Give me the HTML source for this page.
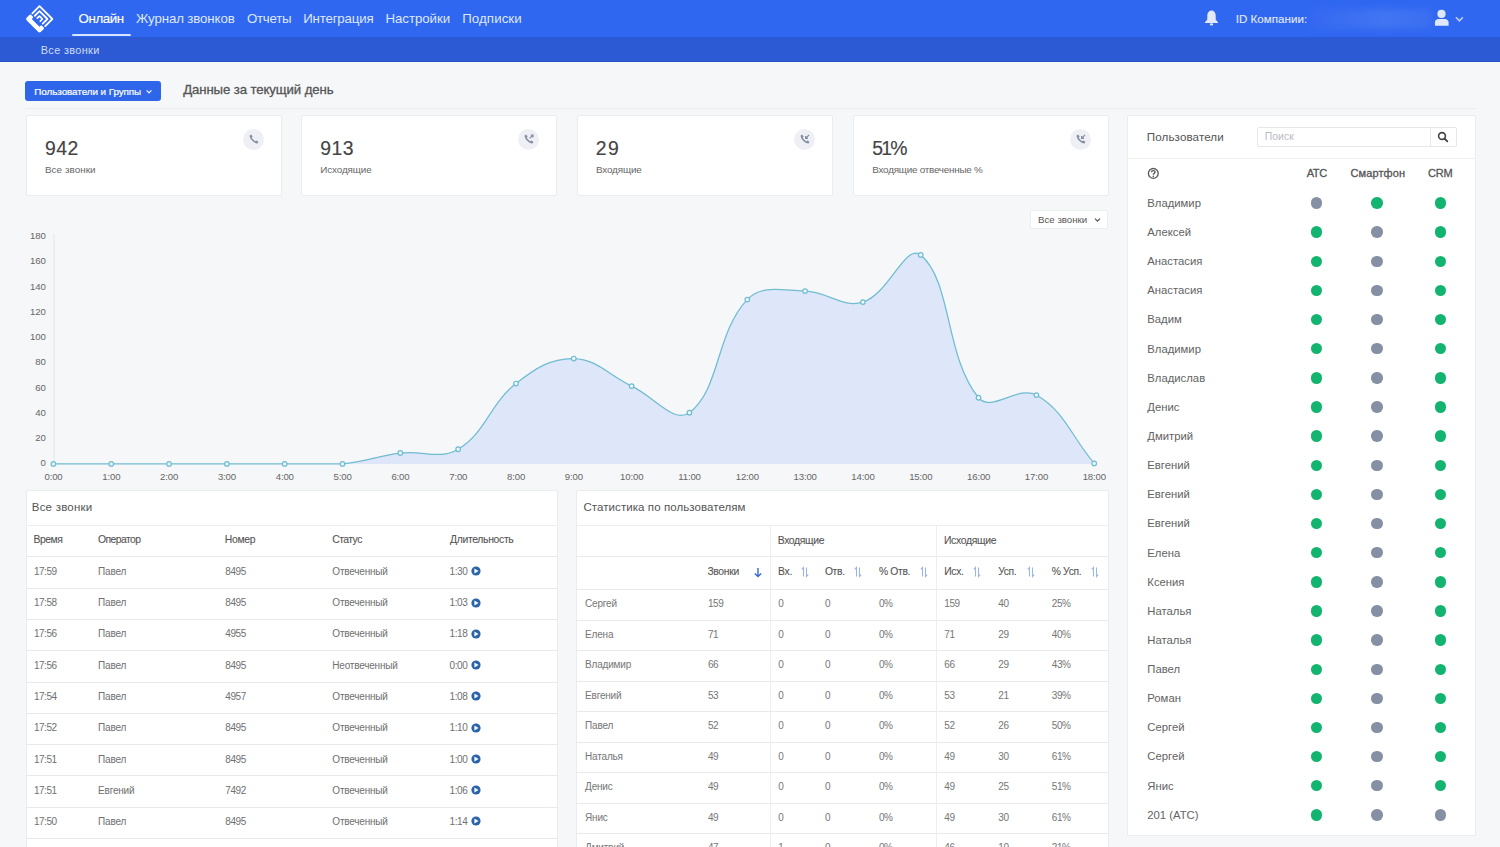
<!DOCTYPE html>
<html><head><meta charset="utf-8"><style>
html,body{margin:0;padding:0}
body{width:1500px;height:847px;overflow:hidden;position:relative;background:#f6f7f9;font-family:"Liberation Sans",sans-serif}
.t{position:absolute;white-space:nowrap;line-height:1}
.r{position:absolute}
</style></head><body>
<div class="r" style="left:0px;top:0px;width:1500px;height:37px;background:#3067f1"></div>
<div class="r" style="left:0px;top:37px;width:1500px;height:25px;background:#2c5ad4"></div>
<div class="r" style="left:0px;top:61px;width:1500px;height:1px;background:#2a53c4"></div>
<svg class="r" style="left:20px;top:0px" width="40" height="37" viewBox="20 0 40 37">
<g transform="translate(39.5,19) rotate(45)" fill="none" stroke="#fff" stroke-linecap="round" stroke-linejoin="round">
<path d="M-9.1,1 V-9.1 H9.1 V1" stroke-width="1.8"/>
<path d="M-5.6,1 V-5.6 H5.6 V1" stroke-width="1.8"/>
<path d="M-2.1,1 V-2.1 H2.1 V1" stroke-width="1.7"/>
</g>
<g transform="translate(39.5,19) rotate(45)" fill="#fff">
<path d="M-10,4 Q-10,3 -9,3 H-6.5 Q-5.5,3 -5.5,4 V5.5 H5.5 V4 Q5.5,3 6.5,3 H9 Q10,3 10,4 V8 Q10,10 8,10 H-8 Q-10,10 -10,8 Z"/>
</g></svg>
<div class="t" style="left:78.60px;top:11.64px;font-size:13.3px;color:#fff;letter-spacing:-0.41px;-webkit-text-stroke:0.15px #fff">Онлайн</div>
<div class="t" style="left:136.10px;top:11.64px;font-size:13.3px;color:#dfe7ff;letter-spacing:-0.137px">Журнал звонков</div>
<div class="t" style="left:246.90px;top:11.64px;font-size:13.3px;color:#dfe7ff;letter-spacing:-0.238px">Отчеты</div>
<div class="t" style="left:303.14px;top:11.64px;font-size:13.3px;color:#dfe7ff;letter-spacing:-0.173px">Интеграция</div>
<div class="t" style="left:385.44px;top:11.64px;font-size:13.3px;color:#dfe7ff;letter-spacing:-0.068px">Настройки</div>
<div class="t" style="left:462.24px;top:11.64px;font-size:13.3px;color:#dfe7ff;letter-spacing:0.073px">Подписки</div>
<div class="r" style="left:72.2px;top:34.4px;width:58.4px;height:2px;background:#d6e4fd;border-radius:1px"></div>
<div class="t" style="left:40.73px;top:44.57px;font-size:10.9px;color:#cfdbfb;letter-spacing:0.356px">Все звонки</div>
<svg class="r" style="left:1203px;top:9px" width="17" height="18" viewBox="0 0 17 18">
<path d="M8.5,1.6 C6.2,1.6 4.3,3.6 4.3,6.6 V10.4 L1.9,13.4 V13.9 H15.1 V13.4 L12.7,10.4 V6.6 C12.7,3.6 10.8,1.6 8.5,1.6 Z" fill="#e3e8fb"/>
<ellipse cx="8.5" cy="15.4" rx="1.7" ry="1.1" fill="#e3e8fb"/></svg>
<div class="t" style="left:1235.66px;top:12.58px;font-size:11.6px;color:#e3eaff;letter-spacing:0.028px;-webkit-text-stroke:0.1px #e3eaff">ID Компании:</div>
<div class="r" style="left:1310px;top:9px;width:122px;height:20px;background:linear-gradient(90deg,#3568f1,#4175f2 60%,#3a6ef1);filter:blur(3px);border-radius:4px"></div>
<svg class="r" style="left:1432px;top:8px" width="36" height="20" viewBox="0 0 36 20">
<circle cx="9.5" cy="5.9" r="4.1" fill="#dfe7fb"/>
<path d="M2.9,17.7 V14.6 C2.9,12.4 4.6,11 6.8,11 H12.6 C14.8,11 16.6,12.4 16.6,14.6 V17.7 Z" fill="#dfe7fb"/>
<path d="M23.9,9.3 L27.4,12.9 L30.9,9.3" fill="none" stroke="#bccdf8" stroke-width="1.6"/>
</svg>
<div class="r" style="left:25px;top:81px;width:136px;height:20px;background:#2f66e9;border-radius:3px"></div>
<div class="t" style="left:34.31px;top:86.62px;font-size:9.9px;color:#fff;letter-spacing:-0.073px;-webkit-text-stroke:0.2px #fff">Пользователи и Группы</div>
<svg class="r" style="left:145px;top:89px" width="8" height="6" viewBox="0 0 8 6"><path d="M1.6,1.4 L4,3.9 L6.4,1.4" fill="none" stroke="#f0f4ff" stroke-width="1.3"/></svg>
<div class="t" style="left:183.13px;top:82.83px;font-size:13.2px;color:#555;letter-spacing:-0.098px;-webkit-text-stroke:0.3px #555">Данные за текущий день</div>
<div class="r" style="left:25px;top:108px;width:1452px;height:1px;background:#eaecf0"></div>
<div class="r" style="left:26px;top:115px;width:256px;height:81px;background:#fff;border:1px solid #eaecef;box-sizing:border-box;border-radius:2px"></div>
<div class="t" style="left:44.93px;top:138.98px;font-size:19.4px;color:#444;letter-spacing:0.471px;-webkit-text-stroke:0.15px #444">942</div>
<div class="t" style="left:45.01px;top:164.62px;font-size:9.9px;color:#666;letter-spacing:0.038px">Все звонки</div>
<div class="r" style="left:243.0px;top:128.5px;width:21px;height:21px;border-radius:50%;background:#eff0f5"></div>
<svg class="r" style="left:247.5px;top:133px" width="12" height="12" viewBox="0 0 12 12"><path d="M3.2,1.6 L4.6,3.6 L3.8,4.8 C4.4,6 5.8,7.4 7.2,8.2 L8.4,7.4 L10.4,8.8 L9.6,10.4 C6.2,10.6 1.4,5.8 1.6,2.4 Z" fill="#858ea3"/></svg>
<div class="r" style="left:301px;top:115px;width:256px;height:81px;background:#fff;border:1px solid #eaecef;box-sizing:border-box;border-radius:2px"></div>
<div class="t" style="left:320.13px;top:138.98px;font-size:19.4px;color:#444;letter-spacing:0.524px;-webkit-text-stroke:0.15px #444">913</div>
<div class="t" style="left:320.21px;top:164.62px;font-size:9.9px;color:#666;letter-spacing:-0.11px">Исходящие</div>
<div class="r" style="left:518.0px;top:128.5px;width:21px;height:21px;border-radius:50%;background:#eff0f5"></div>
<svg class="r" style="left:522.5px;top:133px" width="12" height="12" viewBox="0 0 12 12"><path d="M3.2,1.6 L4.6,3.6 L3.8,4.8 C4.4,6 5.8,7.4 7.2,8.2 L8.4,7.4 L10.4,8.8 L9.6,10.4 C6.2,10.6 1.4,5.8 1.6,2.4 Z" fill="#858ea3"/><path d="M6.6,5.4 L10,2 M7.6,2 H10 V4.4" fill="none" stroke="#858ea3" stroke-width="1.2"/></svg>
<div class="r" style="left:577px;top:115px;width:256px;height:81px;background:#fff;border:1px solid #eaecef;box-sizing:border-box;border-radius:2px"></div>
<div class="t" style="left:595.83px;top:138.98px;font-size:19.4px;color:#444;letter-spacing:1.409px;-webkit-text-stroke:0.15px #444">29</div>
<div class="t" style="left:596.01px;top:164.62px;font-size:9.9px;color:#666;letter-spacing:-0.155px">Входящие</div>
<div class="r" style="left:794.0px;top:128.5px;width:21px;height:21px;border-radius:50%;background:#eff0f5"></div>
<svg class="r" style="left:798.5px;top:133px" width="12" height="12" viewBox="0 0 12 12"><path d="M3.2,1.6 L4.6,3.6 L3.8,4.8 C4.4,6 5.8,7.4 7.2,8.2 L8.4,7.4 L10.4,8.8 L9.6,10.4 C6.2,10.6 1.4,5.8 1.6,2.4 Z" fill="#858ea3"/><path d="M10,2 L6.6,5.4 M6.6,3 V5.4 H9" fill="none" stroke="#858ea3" stroke-width="1.2"/></svg>
<div class="r" style="left:853px;top:115px;width:256px;height:81px;background:#fff;border:1px solid #eaecef;box-sizing:border-box;border-radius:2px"></div>
<div class="t" style="left:872.32px;top:138.98px;font-size:19.4px;color:#444;letter-spacing:-1.872px;-webkit-text-stroke:0.15px #444">51%</div>
<div class="t" style="left:872.31px;top:164.62px;font-size:9.9px;color:#666;letter-spacing:-0.24px">Входящие отвеченные %</div>
<div class="r" style="left:1070.0px;top:128.5px;width:21px;height:21px;border-radius:50%;background:#eff0f5"></div>
<svg class="r" style="left:1074.5px;top:133px" width="12" height="12" viewBox="0 0 12 12"><path d="M3.2,1.6 L4.6,3.6 L3.8,4.8 C4.4,6 5.8,7.4 7.2,8.2 L8.4,7.4 L10.4,8.8 L9.6,10.4 C6.2,10.6 1.4,5.8 1.6,2.4 Z" fill="#858ea3"/><path d="M10,2 L6.6,5.4 M6.6,3 V5.4 H9" fill="none" stroke="#858ea3" stroke-width="1.2"/></svg>
<div class="r" style="left:1029.5px;top:209.5px;width:78.5px;height:19.5px;background:#fff;border:1px solid #eceef1;box-sizing:border-box;border-radius:2px"></div>
<div class="t" style="left:1038.00px;top:214.59px;font-size:9.7px;color:#555">Все звонки</div>
<svg class="r" style="left:1094px;top:217px" width="7" height="6" viewBox="0 0 7 6"><path d="M1,1.6 L3.5,4.1 L6,1.6" fill="none" stroke="#555" stroke-width="1.3"/></svg>
<svg class="r" style="left:0;top:200px" width="1120" height="300" viewBox="0 200 1120 300"><line x1="54" y1="234" x2="54" y2="464" stroke="#e3e5e9" stroke-width="1"/><path d="M53.40,463.90 C76.53,463.90 88.09,463.90 111.22,463.90 C134.35,463.90 145.92,463.90 169.04,463.90 C192.17,463.90 203.74,463.90 226.87,463.90 C250.00,463.90 261.56,463.90 284.69,463.90 C307.82,463.90 319.58,463.90 342.51,463.90 C365.84,461.71 377.03,455.98 400.33,453.02 C423.29,450.11 439.72,460.29 458.16,449.23 C485.98,432.52 489.09,404.66 515.98,383.57 C535.35,368.38 550.86,358.02 573.80,358.53 C597.12,359.04 608.42,375.24 631.62,386.10 C654.67,396.89 674.01,424.22 689.44,412.67 C720.26,389.61 715.59,332.88 747.27,299.58 C761.84,284.25 782.04,290.60 805.09,291.10 C828.30,291.61 842.51,308.49 862.91,302.11 C888.77,294.02 905.64,242.44 920.73,254.92 C951.90,280.69 944.93,356.99 978.56,397.74 C991.19,413.05 1018.21,384.77 1036.38,395.08 C1064.47,411.03 1071.07,436.07 1094.20,463.39 L1094.20,463.90 L53.40,463.90 Z" fill="#dee6fa"/><path d="M53.40,463.90 C76.53,463.90 88.09,463.90 111.22,463.90 C134.35,463.90 145.92,463.90 169.04,463.90 C192.17,463.90 203.74,463.90 226.87,463.90 C250.00,463.90 261.56,463.90 284.69,463.90 C307.82,463.90 319.58,463.90 342.51,463.90 C365.84,461.71 377.03,455.98 400.33,453.02 C423.29,450.11 439.72,460.29 458.16,449.23 C485.98,432.52 489.09,404.66 515.98,383.57 C535.35,368.38 550.86,358.02 573.80,358.53 C597.12,359.04 608.42,375.24 631.62,386.10 C654.67,396.89 674.01,424.22 689.44,412.67 C720.26,389.61 715.59,332.88 747.27,299.58 C761.84,284.25 782.04,290.60 805.09,291.10 C828.30,291.61 842.51,308.49 862.91,302.11 C888.77,294.02 905.64,242.44 920.73,254.92 C951.90,280.69 944.93,356.99 978.56,397.74 C991.19,413.05 1018.21,384.77 1036.38,395.08 C1064.47,411.03 1071.07,436.07 1094.20,463.39" fill="none" stroke="#70bcd0" stroke-width="1.25"/><circle cx="53.40" cy="463.90" r="2.3" fill="#eaf8fb" stroke="#70bcd0" stroke-width="1.2"/><circle cx="111.22" cy="463.90" r="2.3" fill="#eaf8fb" stroke="#70bcd0" stroke-width="1.2"/><circle cx="169.04" cy="463.90" r="2.3" fill="#eaf8fb" stroke="#70bcd0" stroke-width="1.2"/><circle cx="226.87" cy="463.90" r="2.3" fill="#eaf8fb" stroke="#70bcd0" stroke-width="1.2"/><circle cx="284.69" cy="463.90" r="2.3" fill="#eaf8fb" stroke="#70bcd0" stroke-width="1.2"/><circle cx="342.51" cy="463.90" r="2.3" fill="#eaf8fb" stroke="#70bcd0" stroke-width="1.2"/><circle cx="400.33" cy="453.02" r="2.3" fill="#eaf8fb" stroke="#70bcd0" stroke-width="1.2"/><circle cx="458.16" cy="449.23" r="2.3" fill="#eaf8fb" stroke="#70bcd0" stroke-width="1.2"/><circle cx="515.98" cy="383.57" r="2.3" fill="#eaf8fb" stroke="#70bcd0" stroke-width="1.2"/><circle cx="573.80" cy="358.53" r="2.3" fill="#eaf8fb" stroke="#70bcd0" stroke-width="1.2"/><circle cx="631.62" cy="386.10" r="2.3" fill="#eaf8fb" stroke="#70bcd0" stroke-width="1.2"/><circle cx="689.44" cy="412.67" r="2.3" fill="#eaf8fb" stroke="#70bcd0" stroke-width="1.2"/><circle cx="747.27" cy="299.58" r="2.3" fill="#eaf8fb" stroke="#70bcd0" stroke-width="1.2"/><circle cx="805.09" cy="291.10" r="2.3" fill="#eaf8fb" stroke="#70bcd0" stroke-width="1.2"/><circle cx="862.91" cy="302.11" r="2.3" fill="#eaf8fb" stroke="#70bcd0" stroke-width="1.2"/><circle cx="920.73" cy="254.92" r="2.3" fill="#eaf8fb" stroke="#70bcd0" stroke-width="1.2"/><circle cx="978.56" cy="397.74" r="2.3" fill="#eaf8fb" stroke="#70bcd0" stroke-width="1.2"/><circle cx="1036.38" cy="395.08" r="2.3" fill="#eaf8fb" stroke="#70bcd0" stroke-width="1.2"/><circle cx="1094.20" cy="463.39" r="2.3" fill="#eaf8fb" stroke="#70bcd0" stroke-width="1.2"/></svg>
<div class="t" style="left:0.00px;top:458.37px;font-size:9.6px;color:#666;letter-spacing:-0.1px;width:45.7px;text-align:right">0</div>
<div class="t" style="left:0.00px;top:433.11px;font-size:9.6px;color:#666;letter-spacing:-0.1px;width:45.7px;text-align:right">20</div>
<div class="t" style="left:0.00px;top:407.85px;font-size:9.6px;color:#666;letter-spacing:-0.1px;width:45.7px;text-align:right">40</div>
<div class="t" style="left:0.00px;top:382.59px;font-size:9.6px;color:#666;letter-spacing:-0.1px;width:45.7px;text-align:right">60</div>
<div class="t" style="left:0.00px;top:357.33px;font-size:9.6px;color:#666;letter-spacing:-0.1px;width:45.7px;text-align:right">80</div>
<div class="t" style="left:0.00px;top:332.07px;font-size:9.6px;color:#666;letter-spacing:-0.1px;width:45.7px;text-align:right">100</div>
<div class="t" style="left:0.00px;top:306.81px;font-size:9.6px;color:#666;letter-spacing:-0.1px;width:45.7px;text-align:right">120</div>
<div class="t" style="left:0.00px;top:281.55px;font-size:9.6px;color:#666;letter-spacing:-0.1px;width:45.7px;text-align:right">140</div>
<div class="t" style="left:0.00px;top:256.29px;font-size:9.6px;color:#666;letter-spacing:-0.1px;width:45.7px;text-align:right">160</div>
<div class="t" style="left:0.00px;top:231.03px;font-size:9.6px;color:#666;letter-spacing:-0.1px;width:45.7px;text-align:right">180</div>
<div class="t" style="left:23.50px;top:471.97px;font-size:9.6px;color:#666;letter-spacing:-0.15px;width:60px;text-align:center">0:00</div>
<div class="t" style="left:81.32px;top:471.97px;font-size:9.6px;color:#666;letter-spacing:-0.15px;width:60px;text-align:center">1:00</div>
<div class="t" style="left:139.14px;top:471.97px;font-size:9.6px;color:#666;letter-spacing:-0.15px;width:60px;text-align:center">2:00</div>
<div class="t" style="left:196.97px;top:471.97px;font-size:9.6px;color:#666;letter-spacing:-0.15px;width:60px;text-align:center">3:00</div>
<div class="t" style="left:254.79px;top:471.97px;font-size:9.6px;color:#666;letter-spacing:-0.15px;width:60px;text-align:center">4:00</div>
<div class="t" style="left:312.61px;top:471.97px;font-size:9.6px;color:#666;letter-spacing:-0.15px;width:60px;text-align:center">5:00</div>
<div class="t" style="left:370.43px;top:471.97px;font-size:9.6px;color:#666;letter-spacing:-0.15px;width:60px;text-align:center">6:00</div>
<div class="t" style="left:428.26px;top:471.97px;font-size:9.6px;color:#666;letter-spacing:-0.15px;width:60px;text-align:center">7:00</div>
<div class="t" style="left:486.08px;top:471.97px;font-size:9.6px;color:#666;letter-spacing:-0.15px;width:60px;text-align:center">8:00</div>
<div class="t" style="left:543.90px;top:471.97px;font-size:9.6px;color:#666;letter-spacing:-0.15px;width:60px;text-align:center">9:00</div>
<div class="t" style="left:601.72px;top:471.97px;font-size:9.6px;color:#666;letter-spacing:-0.15px;width:60px;text-align:center">10:00</div>
<div class="t" style="left:659.54px;top:471.97px;font-size:9.6px;color:#666;letter-spacing:-0.15px;width:60px;text-align:center">11:00</div>
<div class="t" style="left:717.37px;top:471.97px;font-size:9.6px;color:#666;letter-spacing:-0.15px;width:60px;text-align:center">12:00</div>
<div class="t" style="left:775.19px;top:471.97px;font-size:9.6px;color:#666;letter-spacing:-0.15px;width:60px;text-align:center">13:00</div>
<div class="t" style="left:833.01px;top:471.97px;font-size:9.6px;color:#666;letter-spacing:-0.15px;width:60px;text-align:center">14:00</div>
<div class="t" style="left:890.83px;top:471.97px;font-size:9.6px;color:#666;letter-spacing:-0.15px;width:60px;text-align:center">15:00</div>
<div class="t" style="left:948.66px;top:471.97px;font-size:9.6px;color:#666;letter-spacing:-0.15px;width:60px;text-align:center">16:00</div>
<div class="t" style="left:1006.48px;top:471.97px;font-size:9.6px;color:#666;letter-spacing:-0.15px;width:60px;text-align:center">17:00</div>
<div class="t" style="left:1064.30px;top:471.97px;font-size:9.6px;color:#666;letter-spacing:-0.15px;width:60px;text-align:center">18:00</div>
<div class="r" style="left:26px;top:490px;width:532px;height:400px;background:#fff;border:1px solid #eaecef;box-sizing:border-box;border-radius:2px"></div>
<div class="t" style="left:31.78px;top:502.07px;font-size:11.5px;color:#555;letter-spacing:0.216px">Все звонки</div>
<div class="r" style="left:26px;top:525px;width:532px;height:1px;background:#eceef1"></div>
<div class="t" style="left:33.47px;top:535.30px;font-size:10.4px;color:#555;letter-spacing:-0.486px;-webkit-text-stroke:0.1px #555">Время</div>
<div class="t" style="left:98.03px;top:535.30px;font-size:10.4px;color:#555;letter-spacing:-0.568px;-webkit-text-stroke:0.1px #555">Оператор</div>
<div class="t" style="left:224.87px;top:535.30px;font-size:10.4px;color:#555;letter-spacing:-0.358px;-webkit-text-stroke:0.1px #555">Номер</div>
<div class="t" style="left:332.18px;top:535.30px;font-size:10.4px;color:#555;letter-spacing:-0.537px;-webkit-text-stroke:0.1px #555">Статус</div>
<div class="t" style="left:449.95px;top:535.30px;font-size:10.4px;color:#555;letter-spacing:-0.32px;-webkit-text-stroke:0.1px #555">Длительность</div>
<div class="r" style="left:26px;top:556px;width:532px;height:1px;background:#e8eaee"></div>
<div class="t" style="left:33.90px;top:566.93px;font-size:10px;color:#707070;letter-spacing:-0.45px">17:59</div>
<div class="t" style="left:98.10px;top:566.93px;font-size:10px;color:#707070;letter-spacing:-0.2px">Павел</div>
<div class="t" style="left:225.30px;top:566.93px;font-size:10px;color:#707070;letter-spacing:-0.45px">8495</div>
<div class="t" style="left:332.30px;top:566.93px;font-size:10px;color:#707070;letter-spacing:-0.2px">Отвеченный</div>
<div class="t" style="left:449.60px;top:566.93px;font-size:10px;color:#707070;letter-spacing:-0.45px">1:30</div>
<svg class="r" style="left:471px;top:566.3px" width="10" height="10" viewBox="0 0 10 10"><circle cx="5" cy="5" r="4.6" fill="#2b62a8"/><path d="M3.4,2.6 L7.6,5 L3.4,7.4 Z" fill="#f2fbff"/></svg>
<div class="r" style="left:26px;top:588px;width:532px;height:1px;background:#e8eaee"></div>
<div class="t" style="left:33.90px;top:598.20px;font-size:10px;color:#707070;letter-spacing:-0.45px">17:58</div>
<div class="t" style="left:98.10px;top:598.20px;font-size:10px;color:#707070;letter-spacing:-0.2px">Павел</div>
<div class="t" style="left:225.30px;top:598.20px;font-size:10px;color:#707070;letter-spacing:-0.45px">8495</div>
<div class="t" style="left:332.30px;top:598.20px;font-size:10px;color:#707070;letter-spacing:-0.2px">Отвеченный</div>
<div class="t" style="left:449.60px;top:598.20px;font-size:10px;color:#707070;letter-spacing:-0.45px">1:03</div>
<svg class="r" style="left:471px;top:597.5699999999999px" width="10" height="10" viewBox="0 0 10 10"><circle cx="5" cy="5" r="4.6" fill="#2b62a8"/><path d="M3.4,2.6 L7.6,5 L3.4,7.4 Z" fill="#f2fbff"/></svg>
<div class="r" style="left:26px;top:619px;width:532px;height:1px;background:#e8eaee"></div>
<div class="t" style="left:33.90px;top:629.47px;font-size:10px;color:#707070;letter-spacing:-0.45px">17:56</div>
<div class="t" style="left:98.10px;top:629.47px;font-size:10px;color:#707070;letter-spacing:-0.2px">Павел</div>
<div class="t" style="left:225.30px;top:629.47px;font-size:10px;color:#707070;letter-spacing:-0.45px">4955</div>
<div class="t" style="left:332.30px;top:629.47px;font-size:10px;color:#707070;letter-spacing:-0.2px">Отвеченный</div>
<div class="t" style="left:449.60px;top:629.47px;font-size:10px;color:#707070;letter-spacing:-0.45px">1:18</div>
<svg class="r" style="left:471px;top:628.8399999999999px" width="10" height="10" viewBox="0 0 10 10"><circle cx="5" cy="5" r="4.6" fill="#2b62a8"/><path d="M3.4,2.6 L7.6,5 L3.4,7.4 Z" fill="#f2fbff"/></svg>
<div class="r" style="left:26px;top:650px;width:532px;height:1px;background:#e8eaee"></div>
<div class="t" style="left:33.90px;top:660.74px;font-size:10px;color:#707070;letter-spacing:-0.45px">17:56</div>
<div class="t" style="left:98.10px;top:660.74px;font-size:10px;color:#707070;letter-spacing:-0.2px">Павел</div>
<div class="t" style="left:225.30px;top:660.74px;font-size:10px;color:#707070;letter-spacing:-0.45px">8495</div>
<div class="t" style="left:332.30px;top:660.74px;font-size:10px;color:#707070;letter-spacing:-0.2px">Неотвеченный</div>
<div class="t" style="left:449.60px;top:660.74px;font-size:10px;color:#707070;letter-spacing:-0.45px">0:00</div>
<svg class="r" style="left:471px;top:660.1099999999999px" width="10" height="10" viewBox="0 0 10 10"><circle cx="5" cy="5" r="4.6" fill="#2b62a8"/><path d="M3.4,2.6 L7.6,5 L3.4,7.4 Z" fill="#f2fbff"/></svg>
<div class="r" style="left:26px;top:682px;width:532px;height:1px;background:#e8eaee"></div>
<div class="t" style="left:33.90px;top:692.01px;font-size:10px;color:#707070;letter-spacing:-0.45px">17:54</div>
<div class="t" style="left:98.10px;top:692.01px;font-size:10px;color:#707070;letter-spacing:-0.2px">Павел</div>
<div class="t" style="left:225.30px;top:692.01px;font-size:10px;color:#707070;letter-spacing:-0.45px">4957</div>
<div class="t" style="left:332.30px;top:692.01px;font-size:10px;color:#707070;letter-spacing:-0.2px">Отвеченный</div>
<div class="t" style="left:449.60px;top:692.01px;font-size:10px;color:#707070;letter-spacing:-0.45px">1:08</div>
<svg class="r" style="left:471px;top:691.38px" width="10" height="10" viewBox="0 0 10 10"><circle cx="5" cy="5" r="4.6" fill="#2b62a8"/><path d="M3.4,2.6 L7.6,5 L3.4,7.4 Z" fill="#f2fbff"/></svg>
<div class="r" style="left:26px;top:713px;width:532px;height:1px;background:#e8eaee"></div>
<div class="t" style="left:33.90px;top:723.28px;font-size:10px;color:#707070;letter-spacing:-0.45px">17:52</div>
<div class="t" style="left:98.10px;top:723.28px;font-size:10px;color:#707070;letter-spacing:-0.2px">Павел</div>
<div class="t" style="left:225.30px;top:723.28px;font-size:10px;color:#707070;letter-spacing:-0.45px">8495</div>
<div class="t" style="left:332.30px;top:723.28px;font-size:10px;color:#707070;letter-spacing:-0.2px">Отвеченный</div>
<div class="t" style="left:449.60px;top:723.28px;font-size:10px;color:#707070;letter-spacing:-0.45px">1:10</div>
<svg class="r" style="left:471px;top:722.65px" width="10" height="10" viewBox="0 0 10 10"><circle cx="5" cy="5" r="4.6" fill="#2b62a8"/><path d="M3.4,2.6 L7.6,5 L3.4,7.4 Z" fill="#f2fbff"/></svg>
<div class="r" style="left:26px;top:744px;width:532px;height:1px;background:#e8eaee"></div>
<div class="t" style="left:33.90px;top:754.55px;font-size:10px;color:#707070;letter-spacing:-0.45px">17:51</div>
<div class="t" style="left:98.10px;top:754.55px;font-size:10px;color:#707070;letter-spacing:-0.2px">Павел</div>
<div class="t" style="left:225.30px;top:754.55px;font-size:10px;color:#707070;letter-spacing:-0.45px">8495</div>
<div class="t" style="left:332.30px;top:754.55px;font-size:10px;color:#707070;letter-spacing:-0.2px">Отвеченный</div>
<div class="t" style="left:449.60px;top:754.55px;font-size:10px;color:#707070;letter-spacing:-0.45px">1:00</div>
<svg class="r" style="left:471px;top:753.92px" width="10" height="10" viewBox="0 0 10 10"><circle cx="5" cy="5" r="4.6" fill="#2b62a8"/><path d="M3.4,2.6 L7.6,5 L3.4,7.4 Z" fill="#f2fbff"/></svg>
<div class="r" style="left:26px;top:775px;width:532px;height:1px;background:#e8eaee"></div>
<div class="t" style="left:33.90px;top:785.82px;font-size:10px;color:#707070;letter-spacing:-0.45px">17:51</div>
<div class="t" style="left:98.10px;top:785.82px;font-size:10px;color:#707070;letter-spacing:-0.2px">Евгений</div>
<div class="t" style="left:225.30px;top:785.82px;font-size:10px;color:#707070;letter-spacing:-0.45px">7492</div>
<div class="t" style="left:332.30px;top:785.82px;font-size:10px;color:#707070;letter-spacing:-0.2px">Отвеченный</div>
<div class="t" style="left:449.60px;top:785.82px;font-size:10px;color:#707070;letter-spacing:-0.45px">1:06</div>
<svg class="r" style="left:471px;top:785.1899999999999px" width="10" height="10" viewBox="0 0 10 10"><circle cx="5" cy="5" r="4.6" fill="#2b62a8"/><path d="M3.4,2.6 L7.6,5 L3.4,7.4 Z" fill="#f2fbff"/></svg>
<div class="r" style="left:26px;top:807px;width:532px;height:1px;background:#e8eaee"></div>
<div class="t" style="left:33.90px;top:817.09px;font-size:10px;color:#707070;letter-spacing:-0.45px">17:50</div>
<div class="t" style="left:98.10px;top:817.09px;font-size:10px;color:#707070;letter-spacing:-0.2px">Павел</div>
<div class="t" style="left:225.30px;top:817.09px;font-size:10px;color:#707070;letter-spacing:-0.45px">8495</div>
<div class="t" style="left:332.30px;top:817.09px;font-size:10px;color:#707070;letter-spacing:-0.2px">Отвеченный</div>
<div class="t" style="left:449.60px;top:817.09px;font-size:10px;color:#707070;letter-spacing:-0.45px">1:14</div>
<svg class="r" style="left:471px;top:816.4599999999999px" width="10" height="10" viewBox="0 0 10 10"><circle cx="5" cy="5" r="4.6" fill="#2b62a8"/><path d="M3.4,2.6 L7.6,5 L3.4,7.4 Z" fill="#f2fbff"/></svg>
<div class="r" style="left:26px;top:838px;width:532px;height:1px;background:#e8eaee"></div>
<div class="r" style="left:576px;top:490px;width:533px;height:400px;background:#fff;border:1px solid #eaecef;box-sizing:border-box;border-radius:2px"></div>
<div class="t" style="left:583.42px;top:501.87px;font-size:11.5px;color:#555;letter-spacing:0.076px">Статистика по пользователям</div>
<div class="r" style="left:577px;top:525px;width:531px;height:1px;background:#eceef1"></div>
<div class="r" style="left:770px;top:526px;width:1px;height:330px;background:#eceef1"></div>
<div class="r" style="left:936px;top:526px;width:1px;height:330px;background:#eceef1"></div>
<div class="t" style="left:777.67px;top:535.70px;font-size:10.4px;color:#555;letter-spacing:-0.342px;-webkit-text-stroke:0.1px #555">Входящие</div>
<div class="t" style="left:943.97px;top:535.70px;font-size:10.4px;color:#555;letter-spacing:-0.321px;-webkit-text-stroke:0.1px #555">Исходящие</div>
<div class="r" style="left:577px;top:556px;width:531px;height:1px;background:#e8eaee"></div>
<div class="t" style="left:707.40px;top:567.38px;font-size:10.3px;color:#555;letter-spacing:-0.3px;-webkit-text-stroke:0.1px #555">Звонки</div>
<svg class="r" style="left:752.6px;top:567px" width="10" height="11" viewBox="0 0 10 11"><path d="M5,1 V9.5 M1.8,6.4 L5,9.6 L8.2,6.4" fill="none" stroke="#3a6ad6" stroke-width="1.4"/></svg>
<div class="t" style="left:778.10px;top:567.38px;font-size:10.3px;color:#555;letter-spacing:-0.3px;-webkit-text-stroke:0.1px #555">Вх.</div>
<svg class="r" style="left:799.9px;top:566px" width="10" height="12" viewBox="0 0 10 12"><path d="M3.5,10.5 V1.5 L1.8,3.4 M6.5,1.5 V10.5 L8.2,8.6" fill="none" stroke="#9db5e6" stroke-width="1.1"/></svg>
<div class="t" style="left:824.90px;top:567.38px;font-size:10.3px;color:#555;letter-spacing:-0.3px;-webkit-text-stroke:0.1px #555">Отв.</div>
<svg class="r" style="left:853.4px;top:566px" width="10" height="12" viewBox="0 0 10 12"><path d="M3.5,10.5 V1.5 L1.8,3.4 M6.5,1.5 V10.5 L8.2,8.6" fill="none" stroke="#9db5e6" stroke-width="1.1"/></svg>
<div class="t" style="left:878.90px;top:567.38px;font-size:10.3px;color:#555;letter-spacing:-0.3px;-webkit-text-stroke:0.1px #555">% Отв.</div>
<svg class="r" style="left:918.9px;top:566px" width="10" height="12" viewBox="0 0 10 12"><path d="M3.5,10.5 V1.5 L1.8,3.4 M6.5,1.5 V10.5 L8.2,8.6" fill="none" stroke="#9db5e6" stroke-width="1.1"/></svg>
<div class="t" style="left:944.20px;top:567.38px;font-size:10.3px;color:#555;letter-spacing:-0.3px;-webkit-text-stroke:0.1px #555">Исх.</div>
<svg class="r" style="left:972.2px;top:566px" width="10" height="12" viewBox="0 0 10 12"><path d="M3.5,10.5 V1.5 L1.8,3.4 M6.5,1.5 V10.5 L8.2,8.6" fill="none" stroke="#9db5e6" stroke-width="1.1"/></svg>
<div class="t" style="left:998.20px;top:567.38px;font-size:10.3px;color:#555;letter-spacing:-0.3px;-webkit-text-stroke:0.1px #555">Усп.</div>
<svg class="r" style="left:1026.2px;top:566px" width="10" height="12" viewBox="0 0 10 12"><path d="M3.5,10.5 V1.5 L1.8,3.4 M6.5,1.5 V10.5 L8.2,8.6" fill="none" stroke="#9db5e6" stroke-width="1.1"/></svg>
<div class="t" style="left:1051.70px;top:567.38px;font-size:10.3px;color:#555;letter-spacing:-0.3px;-webkit-text-stroke:0.1px #555">% Усп.</div>
<svg class="r" style="left:1090.3px;top:566px" width="10" height="12" viewBox="0 0 10 12"><path d="M3.5,10.5 V1.5 L1.8,3.4 M6.5,1.5 V10.5 L8.2,8.6" fill="none" stroke="#9db5e6" stroke-width="1.1"/></svg>
<div class="r" style="left:577px;top:589px;width:531px;height:1px;background:#e8eaee"></div>
<div class="t" style="left:585.10px;top:599.23px;font-size:10px;color:#767676;letter-spacing:-0.2px">Сергей</div>
<div class="t" style="left:708.00px;top:599.23px;font-size:10px;color:#767676;letter-spacing:-0.45px">159</div>
<div class="t" style="left:778.20px;top:599.23px;font-size:10px;color:#767676;letter-spacing:-0.45px">0</div>
<div class="t" style="left:825.00px;top:599.23px;font-size:10px;color:#767676;letter-spacing:-0.45px">0</div>
<div class="t" style="left:879.00px;top:599.23px;font-size:10px;color:#767676;letter-spacing:-0.45px">0%</div>
<div class="t" style="left:944.30px;top:599.23px;font-size:10px;color:#767676;letter-spacing:-0.45px">159</div>
<div class="t" style="left:998.30px;top:599.23px;font-size:10px;color:#767676;letter-spacing:-0.45px">40</div>
<div class="t" style="left:1051.80px;top:599.23px;font-size:10px;color:#767676;letter-spacing:-0.45px">25%</div>
<div class="r" style="left:577px;top:620px;width:531px;height:1px;background:#e8eaee"></div>
<div class="t" style="left:585.10px;top:629.73px;font-size:10px;color:#767676;letter-spacing:-0.2px">Елена</div>
<div class="t" style="left:708.00px;top:629.73px;font-size:10px;color:#767676;letter-spacing:-0.45px">71</div>
<div class="t" style="left:778.20px;top:629.73px;font-size:10px;color:#767676;letter-spacing:-0.45px">0</div>
<div class="t" style="left:825.00px;top:629.73px;font-size:10px;color:#767676;letter-spacing:-0.45px">0</div>
<div class="t" style="left:879.00px;top:629.73px;font-size:10px;color:#767676;letter-spacing:-0.45px">0%</div>
<div class="t" style="left:944.30px;top:629.73px;font-size:10px;color:#767676;letter-spacing:-0.45px">71</div>
<div class="t" style="left:998.30px;top:629.73px;font-size:10px;color:#767676;letter-spacing:-0.45px">29</div>
<div class="t" style="left:1051.80px;top:629.73px;font-size:10px;color:#767676;letter-spacing:-0.45px">40%</div>
<div class="r" style="left:577px;top:650px;width:531px;height:1px;background:#e8eaee"></div>
<div class="t" style="left:585.10px;top:660.23px;font-size:10px;color:#767676;letter-spacing:-0.2px">Владимир</div>
<div class="t" style="left:708.00px;top:660.23px;font-size:10px;color:#767676;letter-spacing:-0.45px">66</div>
<div class="t" style="left:778.20px;top:660.23px;font-size:10px;color:#767676;letter-spacing:-0.45px">0</div>
<div class="t" style="left:825.00px;top:660.23px;font-size:10px;color:#767676;letter-spacing:-0.45px">0</div>
<div class="t" style="left:879.00px;top:660.23px;font-size:10px;color:#767676;letter-spacing:-0.45px">0%</div>
<div class="t" style="left:944.30px;top:660.23px;font-size:10px;color:#767676;letter-spacing:-0.45px">66</div>
<div class="t" style="left:998.30px;top:660.23px;font-size:10px;color:#767676;letter-spacing:-0.45px">29</div>
<div class="t" style="left:1051.80px;top:660.23px;font-size:10px;color:#767676;letter-spacing:-0.45px">43%</div>
<div class="r" style="left:577px;top:681px;width:531px;height:1px;background:#e8eaee"></div>
<div class="t" style="left:585.10px;top:690.73px;font-size:10px;color:#767676;letter-spacing:-0.2px">Евгений</div>
<div class="t" style="left:708.00px;top:690.73px;font-size:10px;color:#767676;letter-spacing:-0.45px">53</div>
<div class="t" style="left:778.20px;top:690.73px;font-size:10px;color:#767676;letter-spacing:-0.45px">0</div>
<div class="t" style="left:825.00px;top:690.73px;font-size:10px;color:#767676;letter-spacing:-0.45px">0</div>
<div class="t" style="left:879.00px;top:690.73px;font-size:10px;color:#767676;letter-spacing:-0.45px">0%</div>
<div class="t" style="left:944.30px;top:690.73px;font-size:10px;color:#767676;letter-spacing:-0.45px">53</div>
<div class="t" style="left:998.30px;top:690.73px;font-size:10px;color:#767676;letter-spacing:-0.45px">21</div>
<div class="t" style="left:1051.80px;top:690.73px;font-size:10px;color:#767676;letter-spacing:-0.45px">39%</div>
<div class="r" style="left:577px;top:711px;width:531px;height:1px;background:#e8eaee"></div>
<div class="t" style="left:585.10px;top:721.23px;font-size:10px;color:#767676;letter-spacing:-0.2px">Павел</div>
<div class="t" style="left:708.00px;top:721.23px;font-size:10px;color:#767676;letter-spacing:-0.45px">52</div>
<div class="t" style="left:778.20px;top:721.23px;font-size:10px;color:#767676;letter-spacing:-0.45px">0</div>
<div class="t" style="left:825.00px;top:721.23px;font-size:10px;color:#767676;letter-spacing:-0.45px">0</div>
<div class="t" style="left:879.00px;top:721.23px;font-size:10px;color:#767676;letter-spacing:-0.45px">0%</div>
<div class="t" style="left:944.30px;top:721.23px;font-size:10px;color:#767676;letter-spacing:-0.45px">52</div>
<div class="t" style="left:998.30px;top:721.23px;font-size:10px;color:#767676;letter-spacing:-0.45px">26</div>
<div class="t" style="left:1051.80px;top:721.23px;font-size:10px;color:#767676;letter-spacing:-0.45px">50%</div>
<div class="r" style="left:577px;top:742px;width:531px;height:1px;background:#e8eaee"></div>
<div class="t" style="left:585.10px;top:751.73px;font-size:10px;color:#767676;letter-spacing:-0.2px">Наталья</div>
<div class="t" style="left:708.00px;top:751.73px;font-size:10px;color:#767676;letter-spacing:-0.45px">49</div>
<div class="t" style="left:778.20px;top:751.73px;font-size:10px;color:#767676;letter-spacing:-0.45px">0</div>
<div class="t" style="left:825.00px;top:751.73px;font-size:10px;color:#767676;letter-spacing:-0.45px">0</div>
<div class="t" style="left:879.00px;top:751.73px;font-size:10px;color:#767676;letter-spacing:-0.45px">0%</div>
<div class="t" style="left:944.30px;top:751.73px;font-size:10px;color:#767676;letter-spacing:-0.45px">49</div>
<div class="t" style="left:998.30px;top:751.73px;font-size:10px;color:#767676;letter-spacing:-0.45px">30</div>
<div class="t" style="left:1051.80px;top:751.73px;font-size:10px;color:#767676;letter-spacing:-0.45px">61%</div>
<div class="r" style="left:577px;top:772px;width:531px;height:1px;background:#e8eaee"></div>
<div class="t" style="left:585.10px;top:782.23px;font-size:10px;color:#767676;letter-spacing:-0.2px">Денис</div>
<div class="t" style="left:708.00px;top:782.23px;font-size:10px;color:#767676;letter-spacing:-0.45px">49</div>
<div class="t" style="left:778.20px;top:782.23px;font-size:10px;color:#767676;letter-spacing:-0.45px">0</div>
<div class="t" style="left:825.00px;top:782.23px;font-size:10px;color:#767676;letter-spacing:-0.45px">0</div>
<div class="t" style="left:879.00px;top:782.23px;font-size:10px;color:#767676;letter-spacing:-0.45px">0%</div>
<div class="t" style="left:944.30px;top:782.23px;font-size:10px;color:#767676;letter-spacing:-0.45px">49</div>
<div class="t" style="left:998.30px;top:782.23px;font-size:10px;color:#767676;letter-spacing:-0.45px">25</div>
<div class="t" style="left:1051.80px;top:782.23px;font-size:10px;color:#767676;letter-spacing:-0.45px">51%</div>
<div class="r" style="left:577px;top:803px;width:531px;height:1px;background:#e8eaee"></div>
<div class="t" style="left:585.10px;top:812.73px;font-size:10px;color:#767676;letter-spacing:-0.2px">Янис</div>
<div class="t" style="left:708.00px;top:812.73px;font-size:10px;color:#767676;letter-spacing:-0.45px">49</div>
<div class="t" style="left:778.20px;top:812.73px;font-size:10px;color:#767676;letter-spacing:-0.45px">0</div>
<div class="t" style="left:825.00px;top:812.73px;font-size:10px;color:#767676;letter-spacing:-0.45px">0</div>
<div class="t" style="left:879.00px;top:812.73px;font-size:10px;color:#767676;letter-spacing:-0.45px">0%</div>
<div class="t" style="left:944.30px;top:812.73px;font-size:10px;color:#767676;letter-spacing:-0.45px">49</div>
<div class="t" style="left:998.30px;top:812.73px;font-size:10px;color:#767676;letter-spacing:-0.45px">30</div>
<div class="t" style="left:1051.80px;top:812.73px;font-size:10px;color:#767676;letter-spacing:-0.45px">61%</div>
<div class="r" style="left:577px;top:833px;width:531px;height:1px;background:#e8eaee"></div>
<div class="t" style="left:585.10px;top:843.23px;font-size:10px;color:#767676;letter-spacing:-0.2px">Дмитрий</div>
<div class="t" style="left:708.00px;top:843.23px;font-size:10px;color:#767676;letter-spacing:-0.45px">47</div>
<div class="t" style="left:778.20px;top:843.23px;font-size:10px;color:#767676;letter-spacing:-0.45px">1</div>
<div class="t" style="left:825.00px;top:843.23px;font-size:10px;color:#767676;letter-spacing:-0.45px">0</div>
<div class="t" style="left:879.00px;top:843.23px;font-size:10px;color:#767676;letter-spacing:-0.45px">0%</div>
<div class="t" style="left:944.30px;top:843.23px;font-size:10px;color:#767676;letter-spacing:-0.45px">46</div>
<div class="t" style="left:998.30px;top:843.23px;font-size:10px;color:#767676;letter-spacing:-0.45px">10</div>
<div class="t" style="left:1051.80px;top:843.23px;font-size:10px;color:#767676;letter-spacing:-0.45px">21%</div>
<div class="r" style="left:577px;top:864px;width:531px;height:1px;background:#e8eaee"></div>
<div class="r" style="left:1127px;top:115px;width:349px;height:721px;background:#fff;border:1px solid #eaecef;box-sizing:border-box;border-radius:2px"></div>
<div class="t" style="left:1146.87px;top:131.28px;font-size:11.6px;color:#555;letter-spacing:0.108px">Пользователи</div>
<div class="r" style="left:1257px;top:127px;width:199.5px;height:20px;background:#fff;border:1px solid #e6e7ea;box-sizing:border-box;border-radius:2px"></div>
<div class="r" style="left:1430px;top:127px;width:1px;height:20px;background:#e6e7ea"></div>
<div class="t" style="left:1264.68px;top:132.08px;font-size:10.3px;color:#b9bbbf;letter-spacing:0.135px">Поиск</div>
<svg class="r" style="left:1437px;top:131px" width="12" height="12" viewBox="0 0 12 12"><circle cx="5" cy="5" r="3.4" fill="none" stroke="#444" stroke-width="1.6"/><path d="M7.5,7.5 L10.3,10.3" stroke="#444" stroke-width="1.8" stroke-linecap="round"/></svg>
<div class="r" style="left:1127px;top:158px;width:349px;height:1px;background:#eceef1"></div>
<svg class="r" style="left:1146.5px;top:167px" width="13" height="13" viewBox="0 0 13 13"><circle cx="6.3" cy="6.4" r="4.9" fill="none" stroke="#5a5a5a" stroke-width="1.35"/><path d="M4.5,5.2 C4.5,3.1 8.1,3.1 8.1,5.1 C8.1,6.4 6.3,6.4 6.3,7.7" fill="none" stroke="#5a5a5a" stroke-width="1.35"/><circle cx="6.3" cy="9.4" r="0.8" fill="#5a5a5a"/></svg>
<div class="t" style="left:1306.70px;top:168.29px;font-size:11px;color:#555;letter-spacing:-0.367px;-webkit-text-stroke:0.3px #555">АТС</div>
<div class="t" style="left:1350.45px;top:168.29px;font-size:11px;color:#555;letter-spacing:0.119px;-webkit-text-stroke:0.3px #555">Смартфон</div>
<div class="t" style="left:1428.05px;top:168.29px;font-size:11px;color:#555;letter-spacing:-0.197px;-webkit-text-stroke:0.3px #555">CRM</div>
<div class="t" style="left:1147.30px;top:197.83px;font-size:11.3px;color:#636363">Владимир</div>
<div class="r" style="left:1310.70px;top:197.30px;width:11.4px;height:11.4px;border-radius:50%;background:#8590a5"></div>
<div class="r" style="left:1371.30px;top:197.30px;width:11.4px;height:11.4px;border-radius:50%;background:#13b46f"></div>
<div class="r" style="left:1434.50px;top:197.30px;width:11.4px;height:11.4px;border-radius:50%;background:#13b46f"></div>
<div class="t" style="left:1147.30px;top:226.97px;font-size:11.3px;color:#636363">Алексей</div>
<div class="r" style="left:1310.70px;top:226.44px;width:11.4px;height:11.4px;border-radius:50%;background:#13b46f"></div>
<div class="r" style="left:1371.30px;top:226.44px;width:11.4px;height:11.4px;border-radius:50%;background:#8590a5"></div>
<div class="r" style="left:1434.50px;top:226.44px;width:11.4px;height:11.4px;border-radius:50%;background:#13b46f"></div>
<div class="t" style="left:1147.30px;top:256.11px;font-size:11.3px;color:#636363">Анастасия</div>
<div class="r" style="left:1310.70px;top:255.58px;width:11.4px;height:11.4px;border-radius:50%;background:#13b46f"></div>
<div class="r" style="left:1371.30px;top:255.58px;width:11.4px;height:11.4px;border-radius:50%;background:#8590a5"></div>
<div class="r" style="left:1434.50px;top:255.58px;width:11.4px;height:11.4px;border-radius:50%;background:#13b46f"></div>
<div class="t" style="left:1147.30px;top:285.25px;font-size:11.3px;color:#636363">Анастасия</div>
<div class="r" style="left:1310.70px;top:284.72px;width:11.4px;height:11.4px;border-radius:50%;background:#13b46f"></div>
<div class="r" style="left:1371.30px;top:284.72px;width:11.4px;height:11.4px;border-radius:50%;background:#8590a5"></div>
<div class="r" style="left:1434.50px;top:284.72px;width:11.4px;height:11.4px;border-radius:50%;background:#13b46f"></div>
<div class="t" style="left:1147.30px;top:314.39px;font-size:11.3px;color:#636363">Вадим</div>
<div class="r" style="left:1310.70px;top:313.86px;width:11.4px;height:11.4px;border-radius:50%;background:#13b46f"></div>
<div class="r" style="left:1371.30px;top:313.86px;width:11.4px;height:11.4px;border-radius:50%;background:#8590a5"></div>
<div class="r" style="left:1434.50px;top:313.86px;width:11.4px;height:11.4px;border-radius:50%;background:#13b46f"></div>
<div class="t" style="left:1147.30px;top:343.53px;font-size:11.3px;color:#636363">Владимир</div>
<div class="r" style="left:1310.70px;top:343.00px;width:11.4px;height:11.4px;border-radius:50%;background:#13b46f"></div>
<div class="r" style="left:1371.30px;top:343.00px;width:11.4px;height:11.4px;border-radius:50%;background:#8590a5"></div>
<div class="r" style="left:1434.50px;top:343.00px;width:11.4px;height:11.4px;border-radius:50%;background:#13b46f"></div>
<div class="t" style="left:1147.30px;top:372.67px;font-size:11.3px;color:#636363">Владислав</div>
<div class="r" style="left:1310.70px;top:372.14px;width:11.4px;height:11.4px;border-radius:50%;background:#13b46f"></div>
<div class="r" style="left:1371.30px;top:372.14px;width:11.4px;height:11.4px;border-radius:50%;background:#8590a5"></div>
<div class="r" style="left:1434.50px;top:372.14px;width:11.4px;height:11.4px;border-radius:50%;background:#13b46f"></div>
<div class="t" style="left:1147.30px;top:401.81px;font-size:11.3px;color:#636363">Денис</div>
<div class="r" style="left:1310.70px;top:401.28px;width:11.4px;height:11.4px;border-radius:50%;background:#13b46f"></div>
<div class="r" style="left:1371.30px;top:401.28px;width:11.4px;height:11.4px;border-radius:50%;background:#8590a5"></div>
<div class="r" style="left:1434.50px;top:401.28px;width:11.4px;height:11.4px;border-radius:50%;background:#13b46f"></div>
<div class="t" style="left:1147.30px;top:430.95px;font-size:11.3px;color:#636363">Дмитрий</div>
<div class="r" style="left:1310.70px;top:430.42px;width:11.4px;height:11.4px;border-radius:50%;background:#13b46f"></div>
<div class="r" style="left:1371.30px;top:430.42px;width:11.4px;height:11.4px;border-radius:50%;background:#8590a5"></div>
<div class="r" style="left:1434.50px;top:430.42px;width:11.4px;height:11.4px;border-radius:50%;background:#13b46f"></div>
<div class="t" style="left:1147.30px;top:460.09px;font-size:11.3px;color:#636363">Евгений</div>
<div class="r" style="left:1310.70px;top:459.56px;width:11.4px;height:11.4px;border-radius:50%;background:#13b46f"></div>
<div class="r" style="left:1371.30px;top:459.56px;width:11.4px;height:11.4px;border-radius:50%;background:#8590a5"></div>
<div class="r" style="left:1434.50px;top:459.56px;width:11.4px;height:11.4px;border-radius:50%;background:#13b46f"></div>
<div class="t" style="left:1147.30px;top:489.23px;font-size:11.3px;color:#636363">Евгений</div>
<div class="r" style="left:1310.70px;top:488.70px;width:11.4px;height:11.4px;border-radius:50%;background:#13b46f"></div>
<div class="r" style="left:1371.30px;top:488.70px;width:11.4px;height:11.4px;border-radius:50%;background:#8590a5"></div>
<div class="r" style="left:1434.50px;top:488.70px;width:11.4px;height:11.4px;border-radius:50%;background:#13b46f"></div>
<div class="t" style="left:1147.30px;top:518.37px;font-size:11.3px;color:#636363">Евгений</div>
<div class="r" style="left:1310.70px;top:517.84px;width:11.4px;height:11.4px;border-radius:50%;background:#13b46f"></div>
<div class="r" style="left:1371.30px;top:517.84px;width:11.4px;height:11.4px;border-radius:50%;background:#8590a5"></div>
<div class="r" style="left:1434.50px;top:517.84px;width:11.4px;height:11.4px;border-radius:50%;background:#13b46f"></div>
<div class="t" style="left:1147.30px;top:547.51px;font-size:11.3px;color:#636363">Елена</div>
<div class="r" style="left:1310.70px;top:546.98px;width:11.4px;height:11.4px;border-radius:50%;background:#13b46f"></div>
<div class="r" style="left:1371.30px;top:546.98px;width:11.4px;height:11.4px;border-radius:50%;background:#8590a5"></div>
<div class="r" style="left:1434.50px;top:546.98px;width:11.4px;height:11.4px;border-radius:50%;background:#13b46f"></div>
<div class="t" style="left:1147.30px;top:576.65px;font-size:11.3px;color:#636363">Ксения</div>
<div class="r" style="left:1310.70px;top:576.12px;width:11.4px;height:11.4px;border-radius:50%;background:#13b46f"></div>
<div class="r" style="left:1371.30px;top:576.12px;width:11.4px;height:11.4px;border-radius:50%;background:#8590a5"></div>
<div class="r" style="left:1434.50px;top:576.12px;width:11.4px;height:11.4px;border-radius:50%;background:#13b46f"></div>
<div class="t" style="left:1147.30px;top:605.79px;font-size:11.3px;color:#636363">Наталья</div>
<div class="r" style="left:1310.70px;top:605.26px;width:11.4px;height:11.4px;border-radius:50%;background:#13b46f"></div>
<div class="r" style="left:1371.30px;top:605.26px;width:11.4px;height:11.4px;border-radius:50%;background:#8590a5"></div>
<div class="r" style="left:1434.50px;top:605.26px;width:11.4px;height:11.4px;border-radius:50%;background:#13b46f"></div>
<div class="t" style="left:1147.30px;top:634.93px;font-size:11.3px;color:#636363">Наталья</div>
<div class="r" style="left:1310.70px;top:634.40px;width:11.4px;height:11.4px;border-radius:50%;background:#13b46f"></div>
<div class="r" style="left:1371.30px;top:634.40px;width:11.4px;height:11.4px;border-radius:50%;background:#8590a5"></div>
<div class="r" style="left:1434.50px;top:634.40px;width:11.4px;height:11.4px;border-radius:50%;background:#13b46f"></div>
<div class="t" style="left:1147.30px;top:664.07px;font-size:11.3px;color:#636363">Павел</div>
<div class="r" style="left:1310.70px;top:663.54px;width:11.4px;height:11.4px;border-radius:50%;background:#13b46f"></div>
<div class="r" style="left:1371.30px;top:663.54px;width:11.4px;height:11.4px;border-radius:50%;background:#8590a5"></div>
<div class="r" style="left:1434.50px;top:663.54px;width:11.4px;height:11.4px;border-radius:50%;background:#13b46f"></div>
<div class="t" style="left:1147.30px;top:693.21px;font-size:11.3px;color:#636363">Роман</div>
<div class="r" style="left:1310.70px;top:692.68px;width:11.4px;height:11.4px;border-radius:50%;background:#13b46f"></div>
<div class="r" style="left:1371.30px;top:692.68px;width:11.4px;height:11.4px;border-radius:50%;background:#8590a5"></div>
<div class="r" style="left:1434.50px;top:692.68px;width:11.4px;height:11.4px;border-radius:50%;background:#13b46f"></div>
<div class="t" style="left:1147.30px;top:722.35px;font-size:11.3px;color:#636363">Сергей</div>
<div class="r" style="left:1310.70px;top:721.82px;width:11.4px;height:11.4px;border-radius:50%;background:#13b46f"></div>
<div class="r" style="left:1371.30px;top:721.82px;width:11.4px;height:11.4px;border-radius:50%;background:#8590a5"></div>
<div class="r" style="left:1434.50px;top:721.82px;width:11.4px;height:11.4px;border-radius:50%;background:#13b46f"></div>
<div class="t" style="left:1147.30px;top:751.49px;font-size:11.3px;color:#636363">Сергей</div>
<div class="r" style="left:1310.70px;top:750.96px;width:11.4px;height:11.4px;border-radius:50%;background:#13b46f"></div>
<div class="r" style="left:1371.30px;top:750.96px;width:11.4px;height:11.4px;border-radius:50%;background:#8590a5"></div>
<div class="r" style="left:1434.50px;top:750.96px;width:11.4px;height:11.4px;border-radius:50%;background:#13b46f"></div>
<div class="t" style="left:1147.30px;top:780.63px;font-size:11.3px;color:#636363">Янис</div>
<div class="r" style="left:1310.70px;top:780.10px;width:11.4px;height:11.4px;border-radius:50%;background:#13b46f"></div>
<div class="r" style="left:1371.30px;top:780.10px;width:11.4px;height:11.4px;border-radius:50%;background:#8590a5"></div>
<div class="r" style="left:1434.50px;top:780.10px;width:11.4px;height:11.4px;border-radius:50%;background:#13b46f"></div>
<div class="t" style="left:1147.30px;top:809.77px;font-size:11.3px;color:#636363">201 (АТС)</div>
<div class="r" style="left:1310.70px;top:809.24px;width:11.4px;height:11.4px;border-radius:50%;background:#13b46f"></div>
<div class="r" style="left:1371.30px;top:809.24px;width:11.4px;height:11.4px;border-radius:50%;background:#8590a5"></div>
<div class="r" style="left:1434.50px;top:809.24px;width:11.4px;height:11.4px;border-radius:50%;background:#8590a5"></div>
</body></html>
